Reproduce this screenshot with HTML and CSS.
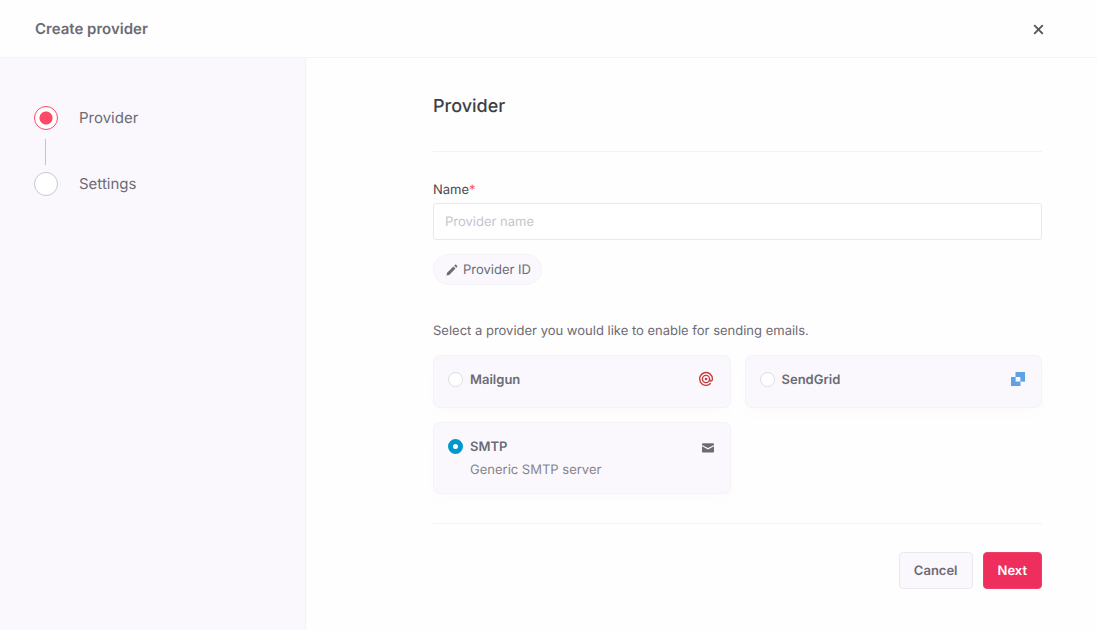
FILE: index.html
```html
<!DOCTYPE html>
<html lang="en">
<head>
    <meta charset="UTF-8">
    <meta name="viewport" content="width=device-width, initial-scale=1.0">
    <title>Create provider</title>
    <link rel="stylesheet" href="styles.css">
</head>
<body>
    <header class="topbar">
        <h1 class="topbar-title">Create provider</h1>
        <button type="button" class="close-btn" aria-label="Close">
            <svg width="11" height="11" viewBox="0 0 11 11"><path d="M1.2 1.2l8.6 8.6M9.8 1.2l-8.6 8.6" stroke="currentColor" stroke-width="1.9" fill="none"/></svg>
        </button>
    </header>
    <div class="wizard">
        <aside class="sidebar">
            <ol class="steps">
                <li class="step active"><span class="step-dot"></span>Provider</li>
                <li class="step"><span class="step-dot"></span>Settings</li>
            </ol>
        </aside>
        <main class="content">
            <form>
                <h2 class="heading">Provider</h2>
                <div class="form-group">
                    <label for="name">Name<span class="required">*</span></label>
                    <input type="text" id="name" name="name" placeholder="Provider name" required>
                </div>
                <button type="button" class="pill">
                    <svg width="12" height="12" viewBox="0 0 12 12" fill="currentColor"><path d="M.5 11.5l.6-2.7 6.3-6.3 2.1 2.1-6.3 6.3zM8.2 1.7l.9-.9c.3-.3.7-.3 1 0l1.1 1.1c.3.3.3.7 0 1l-.9.9z"/></svg>
                    Provider ID
                </button>
                <fieldset class="providers">
                    <legend>Select a provider you would like to enable for sending emails.</legend>
                    <div class="tiles">
                        <label class="tile">
                            <input type="radio" name="provider" value="mailgun">
                            <span class="tile-text"><span class="tile-name">Mailgun</span></span>
                            <svg class="tile-icon mailgun" width="16" height="16" viewBox="0 0 16 16" fill="none" stroke="currentColor"><circle cx="8" cy="8" r="3.6" stroke-width="1.4"/><circle cx="8" cy="8" r="1.3" fill="currentColor" stroke="none"/><path d="M11.6 8v.8c0 1.9 2.8 1.9 2.8-.8A6.4 6.4 0 1 0 12.7 12.3" stroke-width="1.4"/></svg>
                        </label>
                        <label class="tile">
                            <input type="radio" name="provider" value="sendgrid">
                            <span class="tile-text"><span class="tile-name">SendGrid</span></span>
                            <svg class="tile-icon" width="16" height="16" viewBox="0 0 16 16"><path fill="#9cc3ee" d="M2 6h4.5v4.5H2zM11.5 6H16v4.5h-4.500z"/><path fill="#5fa2e3" d="M6.500 1H16v9.500h-4.500V6h-5zM2 6h4.500v4.500h5V15H2z"/></svg>
                        </label>
                        <label class="tile">
                            <input type="radio" name="provider" value="smtp" checked>
                            <span class="tile-text">
                                <span class="tile-name">SMTP</span>
                                <span class="tile-desc">Generic SMTP server</span>
                            </span>
                            <svg class="tile-icon smtp" width="12" height="16" viewBox="0 0 12 16" fill="currentColor"><path d="M0 5V4.500C0 3.700.4 3.300 1.200 3.300h9.600c.8 0 1.200.4 1.200 1.200V5L6 8.100zM0 6.300l6 3.100 6-3.100v5c0 .8-.4 1.200-1.200 1.200H1.200c-.8 0-1.200-.4-1.200-1.200z"/></svg>
                        </label>
                    </div>
                </fieldset>
                <div class="actions">
                    <button type="button" class="btn">Cancel</button>
                    <button type="submit" class="btn btn-primary">Next</button>
                </div>
            </form>
        </main>
    </div>
</body>
</html>
```
FILE: styles.css
```css
* {
    box-sizing: border-box;
}
body {
    margin: 0;
    min-height: 100vh;
    display: flex;
    flex-direction: column;
    font-family: Inter, sans-serif;
    font-size: 13px;
    line-height: 20px;
    color: #6c6b75;
    background-color: #fefefe;
    text-rendering: geometricPrecision;
}
button,
input {
    font: inherit;
    color: inherit;
    text-rendering: inherit;
}
.topbar {
    display: flex;
    align-items: center;
    justify-content: space-between;
    height: 58px;
    padding: 1px 49px 0 35px;
    border-bottom: 1px solid #f3f2f6;
}
.topbar-title {
    margin: 0;
    font-size: 15px;
    font-weight: 600;
}
.close-btn {
    display: flex;
    padding: 4px;
    border: none;
    background: none;
    color: #56555e;
    cursor: pointer;
}
.wizard {
    flex: 1;
    display: flex;
}
.sidebar {
    width: 306px;
    flex-shrink: 0;
    padding: 48px 34px;
    background-color: #faf8fd;
    border-right: 1px solid #f3f2f6;
}
.steps {
    margin: 0;
    padding: 0;
    list-style: none;
}
.step {
    display: flex;
    align-items: center;
    gap: 21px;
    font-size: 15px;
    line-height: 24px;
}
/* connector line between two steps */
.step + .step {
    flex-wrap: wrap;
    row-gap: 7px;
}
.step + .step::before {
    content: "";
    width: 1px;
    height: 26px;
    margin: 9px calc(100% - 12px) 0 11px;
    background-color: #c4c3ca;
}
.step-dot {
    width: 24px;
    height: 24px;
    border: 1px solid #c9c8cf;
    border-radius: 50%;
    background-color: #fff;
}
.step.active .step-dot {
    border-color: #ff4766;
    background: radial-gradient(circle, #ff4766 6px, #fff 7px);
}
.content {
    flex: 1;
    padding: 37px 55px 40px 127px;
}
.heading {
    margin: 0 0 28px;
    padding-bottom: 32px;
    border-bottom: 1px solid #f3f2f6;
    font-size: 18px;
    font-weight: 500;
    line-height: 24px;
    color: #3f3e46;
}
.form-group {
    margin-bottom: 14px;
}
.form-group label {
    display: block;
    margin-bottom: 3px;
    color: #4a4951;
}
.required {
    color: #ff5548;
}
.form-group input {
    display: block;
    width: 100%;
    height: 37px;
    padding: 0 11px;
    border: 1px solid #e9e8ef;
    border-radius: 3px;
    background-color: #fff;
}
.form-group input::placeholder {
    color: #c6c5cc;
}
.pill {
    display: flex;
    align-items: center;
    gap: 5px;
    height: 31px;
    padding: 0 10px 0 12px;
    border: 1px solid #f4f2f8;
    border-radius: 16px;
    background-color: #faf8fd;
    cursor: pointer;
}
.providers {
    margin: 36px 0 29px;
    padding: 0;
    border: none;
}
.providers legend {
    padding: 0;
    margin-bottom: 14px;
}
.tiles {
    display: grid;
    grid-template-columns: 1fr 1fr;
    gap: 14px;
}
.tile {
    display: flex;
    align-items: flex-start;
    gap: 7px;
    min-height: 53px;
    padding: 14px 16px 13px 14px;
    border: 1px solid #f3f2f7;
    border-radius: 7px;
    background-color: #faf8fd;
    box-shadow: 0 8px 16px rgba(120, 80, 160, 0.01);
    cursor: pointer;
}
.tile input {
    appearance: none;
    width: 15px;
    height: 15px;
    margin: 2px 0 0;
    border: 1px solid #dddce2;
    border-radius: 50%;
    background-color: #fff;
}
.tile input:checked {
    border: 5px solid #0098cc;
}
.tile-text {
    flex: 1;
    display: flex;
    flex-direction: column;
    gap: 3px;
}
.tile-name {
    font-weight: 600;
}
.tile-desc {
    color: #85848d;
}
.tile-icon {
    margin-top: 1px;
}
.mailgun {
    color: #c73a3a;
}
.smtp {
    margin-top: 3px;
}
.actions {
    display: flex;
    justify-content: flex-end;
    gap: 10px;
    padding-top: 28px;
    border-top: 1px solid #f3f2f6;
}
.btn {
    height: 37px;
    padding: 0 14px;
    border: 1px solid #e9e8ee;
    border-radius: 4px;
    background-color: #faf8fd;
    font-weight: 600;
    cursor: pointer;
}
.btn-primary {
    border-color: #ef3f68;
    background-color: #ee2f5d;
    color: #fff;
}
```
